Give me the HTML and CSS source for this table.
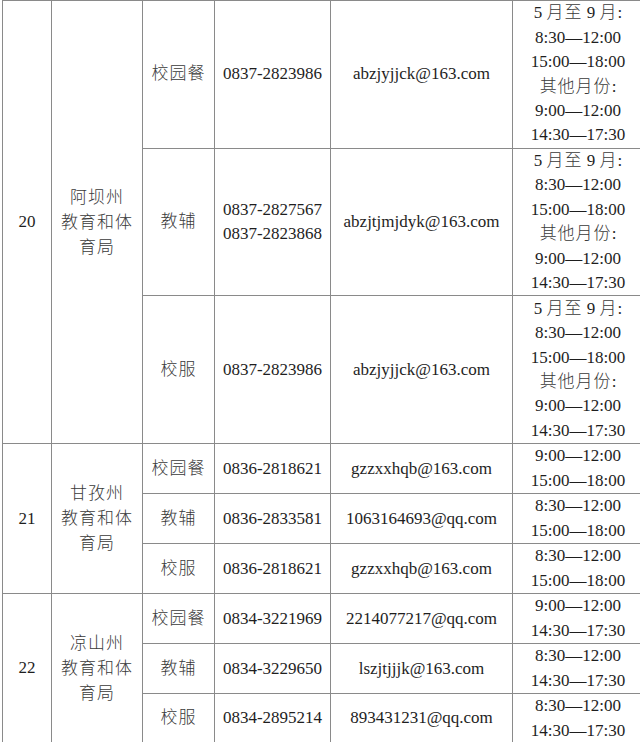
FILE: index.html
```html
<!DOCTYPE html>
<html lang="zh-CN">
<head>
<meta charset="utf-8">
<title>联系方式</title>
<link rel="stylesheet" href="styles.css">
</head>
<body>
<div class="wrap">
<table class="sheet">
<colgroup>
<col class="c-no"><col class="c-org"><col class="c-cat"><col class="c-tel"><col class="c-mail"><col class="c-time">
</colgroup>
<tbody>
<tr class="r-big">
<td rowspan="3">20</td>
<td rowspan="3" class="org zh">阿坝州<br>教育和体<br>育局</td>
<td class="zh">校园餐</td>
<td>0837-2823986</td>
<td>abzjyjjck@163.com</td>
<td class="time">5 <span class="zh">月至</span> 9 <span class="zh">月</span>:<br>8:30—12:00<br>15:00—18:00<br><span class="zh">其他月份</span>:<br>9:00—12:00<br>14:30—17:30</td>
</tr>
<tr class="r-big2">
<td class="zh">教辅</td>
<td class="tel2">0837-2827567<br>0837-2823868</td>
<td>abzjtjmjdyk@163.com</td>
<td class="time">5 <span class="zh">月至</span> 9 <span class="zh">月</span>:<br>8:30—12:00<br>15:00—18:00<br><span class="zh">其他月份</span>:<br>9:00—12:00<br>14:30—17:30</td>
</tr>
<tr class="r-big">
<td class="zh">校服</td>
<td>0837-2823986</td>
<td>abzjyjjck@163.com</td>
<td class="time">5 <span class="zh">月至</span> 9 <span class="zh">月</span>:<br>8:30—12:00<br>15:00—18:00<br><span class="zh">其他月份</span>:<br>9:00—12:00<br>14:30—17:30</td>
</tr>
<tr class="r-s1">
<td rowspan="3">21</td>
<td rowspan="3" class="org zh">甘孜州<br>教育和体<br>育局</td>
<td class="zh">校园餐</td>
<td>0836-2818621</td>
<td>gzzxxhqb@163.com</td>
<td class="time">9:00—12:00<br>15:00—18:00</td>
</tr>
<tr class="r-s2">
<td class="zh">教辅</td>
<td>0836-2833581</td>
<td>1063164693@qq.com</td>
<td class="time">8:30—12:00<br>15:00—18:00</td>
</tr>
<tr class="r-s2">
<td class="zh">校服</td>
<td>0836-2818621</td>
<td>gzzxxhqb@163.com</td>
<td class="time">8:30—12:00<br>15:00—18:00</td>
</tr>
<tr class="r-s2">
<td rowspan="3">22</td>
<td rowspan="3" class="org zh">凉山州<br>教育和体<br>育局</td>
<td class="zh">校园餐</td>
<td>0834-3221969</td>
<td>2214077217@qq.com</td>
<td class="time">9:00—12:00<br>14:30—17:30</td>
</tr>
<tr class="r-s2">
<td class="zh">教辅</td>
<td>0834-3229650</td>
<td>lszjtjjjk@163.com</td>
<td class="time">8:30—12:00<br>14:30—17:30</td>
</tr>
<tr class="r-s1">
<td class="zh">校服</td>
<td>0834-2895214</td>
<td>893431231@qq.com</td>
<td class="time">8:30—12:00<br>14:30—17:30</td>
</tr>
</tbody>
</table>
</div>
</body>
</html>
```
FILE: styles.css
```css
html, body {
  margin: 0;
  padding: 0;
  background: #ffffff;
  overflow: hidden;
}
.wrap {
  width: 640px;
  height: 742px;
  overflow: hidden;
  padding-left: 2px;
  box-sizing: border-box;
}
.sheet {
  border-collapse: collapse;
  table-layout: fixed;
  width: 649px;
  font-family: "Liberation Serif", "Noto Sans CJK SC", serif;
  font-size: 17px;
  color: #1e1e1e;
}
.c-no { width: 49px; }
.c-org { width: 91px; }
.c-cat { width: 72px; }
.c-tel { width: 116px; }
.c-mail { width: 182px; }
.c-time { width: 139px; }
.sheet td {
  border: 1px solid #8a8a8a;
  padding: 0;
  text-align: center;
  vertical-align: middle;
  line-height: 24.5px;
  white-space: nowrap;
  overflow: hidden;
}
.sheet .zh {
  font-weight: 300;
  color: #3a3a3a;
  letter-spacing: 1px;
}
.sheet td.time {
  line-height: 24.4px;
  padding-right: 8px;
}
.sheet td.org {
  line-height: 25px;
}
.r-big td { height: 147px; }
.r-big2 td { height: 146px; }
.r-s1 td { height: 48px; }
.r-s2 td { height: 49px; }
```
